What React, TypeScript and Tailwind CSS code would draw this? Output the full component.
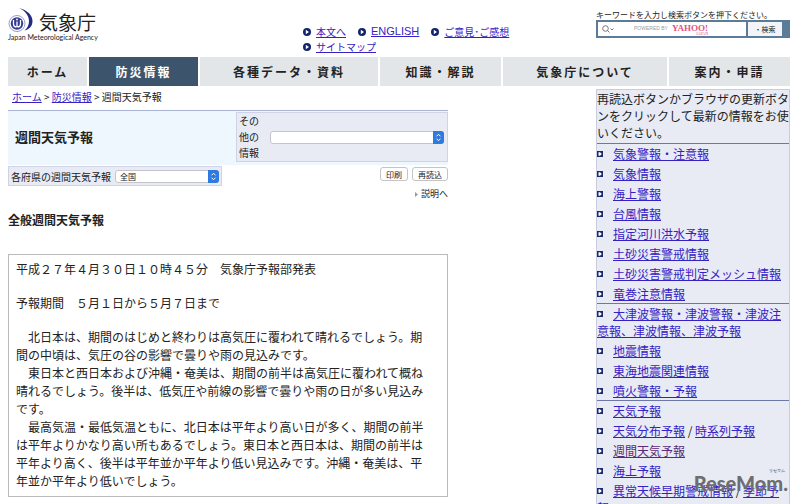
import type { ReactNode } from 'react';

type Item = { label: string; tail?: string; visited?: boolean };

const NAV = [
  { label: 'ホーム', cls: 'w-[79px]' },
  { label: '防災情報', cls: 'w-[109px]', active: true },
  { label: '各種データ・資料', cls: 'w-[178px]' },
  { label: '知識・解説', cls: 'w-[121px]' },
  { label: '気象庁について', cls: 'w-[164px]' },
  { label: '案内・申請', cls: 'w-[121px]' },
];

const GROUPS: Item[][] = [
  [
    { label: '気象警報・注意報' },
    { label: '気象情報' },
    { label: '海上警報' },
    { label: '台風情報' },
    { label: '指定河川洪水予報' },
    { label: '土砂災害警戒情報' },
    { label: '土砂災害警戒判定メッシュ情報' },
    { label: '竜巻注意情報' },
  ],
  [
    { label: '大津波警報・津波警報・津波注意報、津波情報、津波予報' },
    { label: '地震情報' },
    { label: '東海地震関連情報' },
    { label: '噴火警報・予報' },
  ],
  [
    { label: '天気予報' },
    { label: '天気分布予報', tail: '時系列予報' },
    { label: '週間天気予報', visited: true },
    { label: '海上予報' },
    { label: '異常天候早期警戒情報', tail: '季節予報' },
  ],
];

const PARAGRAPHS = [
  '　北日本は、期間のはじめと終わりは高気圧に覆われて晴れるでしょう。期間の中頃は、気圧の谷の影響で曇りや雨の見込みです。',
  '　東日本と西日本および沖縄・奄美は、期間の前半は高気圧に覆われて概ね晴れるでしょう。後半は、低気圧や前線の影響で曇りや雨の日が多い見込みです。',
  '　最高気温・最低気温ともに、北日本は平年より高い日が多く、期間の前半は平年よりかなり高い所もあるでしょう。東日本と西日本は、期間の前半は平年より高く、後半は平年並か平年より低い見込みです。沖縄・奄美は、平年並か平年より低いでしょう。',
];

function Link({ children, visited }: { children: ReactNode; visited?: boolean }) {
  return (
    <a href="#" className={visited ? 'text-[#5c2a78] underline' : 'text-[#3522c4] underline'}>
      {children}
    </a>
  );
}

function RoundBullet() {
  return (
    <svg viewBox="0 0 8 8" className="size-2 shrink-0">
      <circle cx="4" cy="4" r="4" fill="#12256b" />
      <path d="M2.800 1.800 6 4 2.800 6.200Z" fill="#fff" />
    </svg>
  );
}

function SquareBullet() {
  return (
    <svg viewBox="0 0 6 6" className="mr-[10px] inline-block size-[6px] align-[2px]">
      <path d="M0 0H6V6H0Z" fill="#1b2b6e" />
      <path d="M1.500 1.200H3L4.800 3 3 4.800H1.500Z" fill="#fff" />
    </svg>
  );
}

function Logo() {
  return (
    <svg viewBox="0 0 26 26" className="h-[26px] w-[26px]">
      <path d="M11 1C19 3 24.500 8 24.500 14c0 5-3 8.500-8 9.500 3-2.500 4.500-5.500 4.500-9.500C21 9 17.500 4 11 1Z" fill="#252a86" />
      <circle cx="9" cy="16.500" r="8" fill="#fff" stroke="#8a90c4" strokeWidth="0.900" />
      <circle cx="9" cy="16.500" r="6.200" fill="#343a92" />
      <path d="M5.500 13V17q0 3 3 3M12.500 13V17q0 3-3 3M9 14.500V20" stroke="#fff" strokeWidth="1.300" fill="none" />
      <circle cx="9" cy="12.500" r="0.900" fill="#fff" />
    </svg>
  );
}

function MacSelect({ label, options, className }: { label: string; options: string[]; className: string }) {
  return (
    <span className={`relative flex h-[13px] ${className}`}>
      <select
        aria-label={label}
        className="h-full w-full appearance-none rounded-[3px] border border-[#c4c5ca] bg-white pl-1 text-[8px] leading-[11px] text-[#222]"
      >
        {options.map((o) => (
          <option key={o}>{o}</option>
        ))}
      </select>
      <svg viewBox="0 0 11 13" className="pointer-events-none absolute top-0 right-0 h-[13px] w-[11px]">
        <path d="M0 0H8Q11 0 11 3V10Q11 13 8 13H0Z" fill="#2d7be0" />
        <path d="M3.500 5.300 5.500 3.300 7.500 5.300M3.500 7.700 5.500 9.700 7.500 7.700" stroke="#fff" fill="none" />
      </svg>
    </span>
  );
}

function Header() {
  return (
    <header className="flex h-[57px] items-start justify-between">
      <a href="#" className="flex w-[90px] flex-col pt-[7px] text-[#222]">
        <span className="flex h-[26px] items-center gap-[5px]">
          <Logo />
          <span className="pt-1 text-[19px] leading-5 whitespace-nowrap">気象庁</span>
        </span>
        <span className="font-[Lato,sans-serif] text-[7px] leading-[9px] whitespace-nowrap">
          Japan Meteorological Agency
        </span>
      </a>
      <ul className="ml-[120px] flex w-[208px] flex-wrap gap-x-3 pt-6 text-[10px] leading-[15px]">
        <li className="flex items-center gap-[5px]"><RoundBullet /><Link>本文へ</Link></li>
        <li className="flex items-center gap-[5px] font-['Liberation_Sans',sans-serif] text-[11px]"><RoundBullet /><Link>ENGLISH</Link></li>
        <li className="flex items-center gap-[5px]"><RoundBullet /><Link>ご意見･ご感想</Link></li>
        <li className="flex items-center gap-[5px]"><RoundBullet /><Link>サイトマップ</Link></li>
      </ul>
      <form className="w-[194px] pt-[9px]">
        <label htmlFor="q" className="block text-[8px] leading-[11px] whitespace-nowrap text-[#222]">
          キーワードを入力し検索ボタンを押下ください。
        </label>
        <div className="flex h-[18px] gap-[2px] bg-[#5c7b98] py-[2px] pr-2 pl-[2px]">
          <div className="relative flex min-w-0 flex-1 bg-white">
            <input id="q" className="w-full min-w-0 outline-none" />
            <span className="pointer-events-none absolute inset-0 flex items-center gap-1 pl-1">
              <svg viewBox="0 0 12 8" className="h-2 w-3" fill="none" stroke="#777">
                <circle cx="3.500" cy="3.500" r="2.800" />
                <path d="M5.500 5.500 7.500 7.500M8.500 3.500 10 5 11.500 3.500" />
              </svg>
              <span className="ml-4 font-['Liberation_Sans',sans-serif] text-[5px] whitespace-nowrap text-[#999]">POWERED BY</span>
              <span className="flex flex-col items-end font-['Liberation_Serif',serif] text-[#e4507c]">
                <span className="text-[9px] leading-[8px] font-bold">YAHOO!</span>
                <span className="text-[4px] leading-[3px]">JAPAN</span>
              </span>
            </span>
          </div>
          <button type="button" className="w-[34px] bg-[#f2f4f7] text-[7px] text-[#222]">・検索</button>
        </div>
      </form>
    </header>
  );
}

function Sidebar() {
  return (
    <aside className="w-[194px] shrink-0 border border-[#c9cce0] bg-[#e8ebf4] text-[12px] leading-[17px] text-[#222]">
      <p className="pb-[2px]">再読込ボタンかブラウザの更新ボタンをクリックして最新の情報をお使いください。</p>
      {GROUPS.map((group) => (
        <ul key={group[0].label} className="flex flex-col gap-[3px] border-t border-[#6d78a8] pt-px pb-px">
          {group.map((item) => (
            <li key={item.label}>
              <SquareBullet />
              <Link visited={item.visited}>{item.label}</Link>
              {item.tail && (
                <>
                  {' / '}
                  <Link>{item.tail}</Link>
                </>
              )}
            </li>
          ))}
        </ul>
      ))}
    </aside>
  );
}

export default function App() {
  return (
    <div className="relative h-screen overflow-hidden bg-white pr-[10px] pl-2 font-['Noto_Sans_CJK_JP',sans-serif]">
      <Header />
      <nav className="flex gap-[2px]">
        {NAV.map((n) => (
          <a
            key={n.label}
            href="#"
            className={`flex h-[29px] grow items-center justify-center text-[12px] font-bold tracking-[2px] whitespace-nowrap ${n.cls} ${
              n.active ? 'bg-[#3d556c] text-white' : 'bg-[#e2e6e9] text-[#222]'
            }`}
          >
            {n.label}
          </a>
        ))}
      </nav>
      <div className="flex items-start justify-between pt-[3px]">
        <main className="w-[440px] text-[#222]">
          <div className="pl-1 text-[10px] leading-[16px]">
            <Link>ホーム</Link> &gt; <Link>防災情報</Link> &gt; 週間天気予報
          </div>
          <div className="mt-[5px] flex border-t border-[#a9b5d2] bg-[#eef7fe] pb-[3px]">
            <h1 className="flex flex-1 items-center pl-[7px] text-[13px] font-bold">週間天気予報</h1>
            <div className="mt-px flex w-[212px] items-center justify-between border border-[#d0d3e8] bg-[#e8ebf4] pr-[3px] pl-[2px]">
              <span className="w-[22px] text-[10px] leading-4">その他の情報</span>
              <MacSelect label="その他の情報" options={['']} className="w-[174px]" />
            </div>
          </div>
          <div className="flex items-start justify-between pt-px">
            <div className="flex h-5 items-center gap-1 border border-[#d0d3e8] bg-[#e8ebf4] px-[2px] text-[10px]">
              各府県の週間天気予報
              <MacSelect label="各府県の週間天気予報" options={['全国']} className="w-[104px]" />
            </div>
            <div className="flex gap-1 pt-px">
              <button type="button" className="h-[14px] w-7 rounded-[3px] border border-[#c4c4c4] text-[8px] leading-[11px]">印刷</button>
              <button type="button" className="h-[14px] w-9 rounded-[3px] border border-[#c4c4c4] text-[8px] leading-[11px]">再読込</button>
            </div>
          </div>
          <div className="flex items-center justify-end gap-[3px] text-[9px] leading-4">
            <svg viewBox="0 0 3 5" className="h-[5px] w-[3px]">
              <path d="M0 0 3 2.500 0 5Z" fill="#999" />
            </svg>
            <a href="#">説明へ</a>
          </div>
          <h2 className="mt-[9px] text-[12px] leading-[18px] font-bold">全般週間天気予報</h2>
          <section className="mt-[25px] flex flex-col gap-4 border border-[#bbb] pt-[5px] pr-4 pb-[6px] pl-[7px] text-[12px] leading-[18px]">
            <p>平成２７年４月３０日１０時４５分　気象庁予報部発表</p>
            <p>予報期間　５月１日から５月７日まで</p>
            <div>
              {PARAGRAPHS.map((p) => (
                <p key={p}>{p}</p>
              ))}
            </div>
          </section>
        </main>
        <Sidebar />
      </div>
      <div className="pointer-events-none absolute right-3 bottom-[9px] font-[Lato,sans-serif] text-[20px] leading-6 font-black text-[#6e6e72]">
        <span className="absolute -top-[2px] right-[3px] text-[4px] leading-[4px]">リセマム</span>
        ReseMom.
      </div>
    </div>
  );
}
